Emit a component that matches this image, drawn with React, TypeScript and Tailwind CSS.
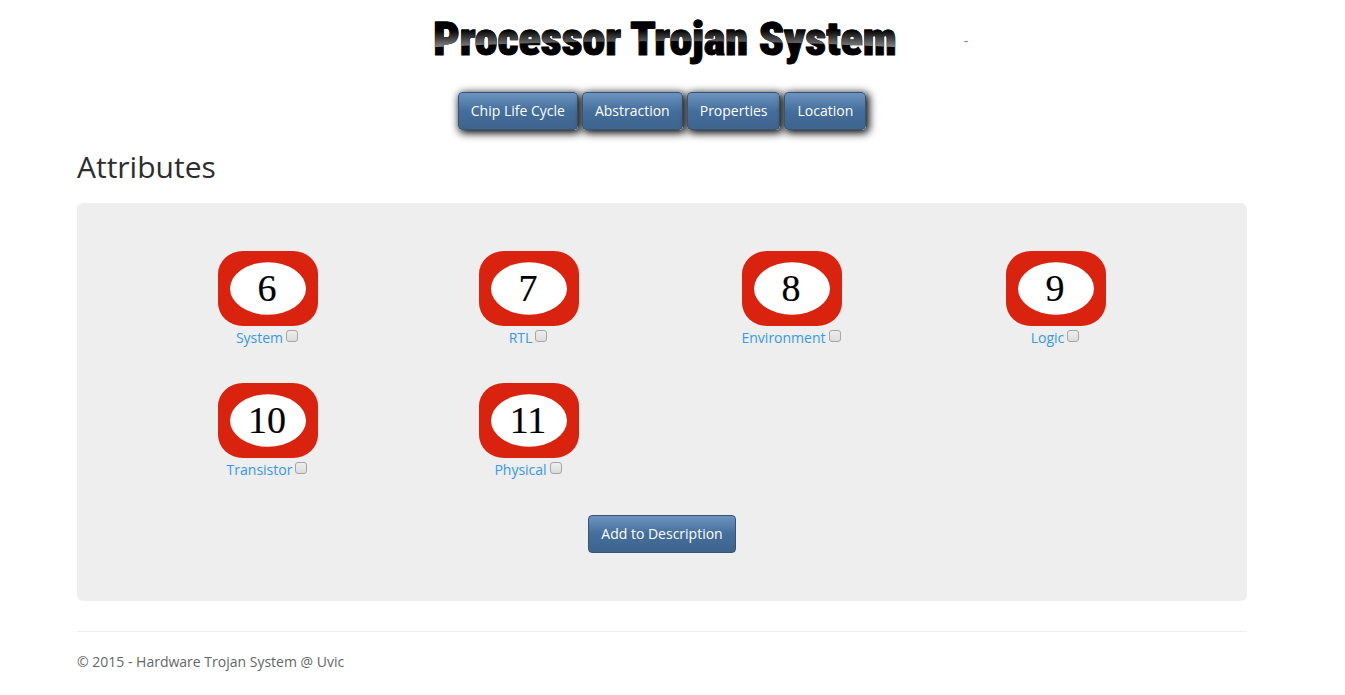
import React from "react";

const buttonBase =
  "h-[38px] cursor-pointer rounded border border-[#345578] bg-[linear-gradient(#6d94bf,#446e9b_50%,#3e648d)] px-3 text-sm text-white";

const sections = ["Chip Life Cycle", "Abstraction", "Properties", "Location"];

const attributes = [
  { number: 6, name: "System" },
  { number: 7, name: "RTL" },
  { number: 8, name: "Environment" },
  { number: 9, name: "Logic" },
  { number: 10, name: "Transistor" },
  { number: 11, name: "Physical" },
];

function Title() {
  const text = {
    x: 309,
    y: 45,
    textAnchor: "middle" as const,
    fontSize: 46,
    fontWeight: 900,
    fontFamily: "Impact, 'Roboto Condensed', Roboto, sans-serif",
    strokeWidth: 1,
  };
  return (
    <svg width="604" height="60" viewBox="0 0 604 60" role="img" aria-label="Processor Trojan System">
      <defs>
        <linearGradient id="gloss" gradientUnits="userSpaceOnUse" x1="0" y1="20" x2="0" y2="38">
          <stop offset="0" stopColor="#000" />
          <stop offset="1" stopColor="#8c8c8c" />
        </linearGradient>
        <clipPath id="arc">
          <path d="M60 0H560V38Q308 24 60 38Z" />
        </clipPath>
      </defs>
      <text {...text} fill="#000" stroke="#000">
        Processor Trojan System
      </text>
      <text {...text} fill="url(#gloss)" stroke="url(#gloss)" clipPath="url(#arc)" aria-hidden="true">
        Processor Trojan System
      </text>
    </svg>
  );
}

function Badge({ value }: { value: number }) {
  return (
    <svg width="100" height="75" viewBox="0 0 100 75" aria-hidden="true">
      <rect width="100" height="75" rx="25" ry="23" fill="#da230f" />
      <ellipse cx="50" cy="37.5" rx="38" ry="26.3" fill="#fff" />
      <text
        x="49"
        y="50"
        textAnchor="middle"
        fontSize="38"
        fontFamily="'Century Schoolbook', 'Liberation Serif', serif"
        fill="#000"
        stroke="#000"
        strokeWidth="0.2"
      >
        {value}
      </text>
    </svg>
  );
}

function Attribute({ number, name }: { number: number; name: string }) {
  const id = `attribute-${number}`;
  return (
    <div className="flex h-[132px] flex-col items-center">
      <Badge value={number} />
      <div className="flex gap-[3px] pr-0.5 pt-px">
        <label htmlFor={id} className="cursor-pointer text-sm leading-[22px] text-[#3399f3]">
          {name}
        </label>
        <input
          id={id}
          type="checkbox"
          className="mt-[3px] size-3 appearance-none rounded-[3px] border border-[#a5a5a5] bg-linear-to-b from-[#eeeeee] to-[#dcdcdc] checked:bg-[#446e9b] checked:bg-none"
        />
      </div>
    </div>
  );
}

export default function App() {
  return (
    <div className="pr-[21px] font-['Open_Sans',sans-serif] text-sm text-[#666666]">
      <div className="mx-auto max-w-[1170px]">
        <header className="flex flex-col items-center pt-[10px]">
          <h1 className="flex gap-1">
            <Title />
            <a href="#top" className="pt-[21px] text-sm font-normal text-[#3399f3]">
              -
            </a>
          </h1>
          <nav className="flex gap-1 pt-[22px]">
            {sections.map((section) => (
              <button
                key={section}
                type="button"
                className={`${buttonBase} shadow-[2px_2px_8px_1px_#000000]`}
              >
                {section}
              </button>
            ))}
          </nav>
        </header>
        <main>
          <h2 className="pt-5 text-[30px] leading-[33px] text-[#2d2d2d]">Attributes</h2>
          <form className="mt-5 rounded-md bg-[#eeeeee] px-[60px] py-12" onSubmit={(e) => e.preventDefault()}>
            <div className="grid grid-cols-[262fr_260fr_266fr_262fr]">
              {attributes.map((attribute) => (
                <Attribute key={attribute.number} {...attribute} />
              ))}
            </div>
            <div className="flex justify-center">
              <button type="submit" className={buttonBase}>
                Add to Description
              </button>
            </div>
          </form>
        </main>
        <footer className="mt-[30px] border-t border-[#eeeeee] pt-5">
          <p className="leading-5">© 2015 - Hardware Trojan System @ Uvic</p>
        </footer>
      </div>
    </div>
  );
}
